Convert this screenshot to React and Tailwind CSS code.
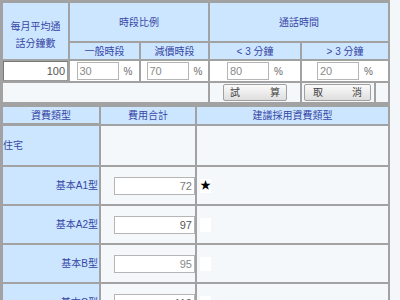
import React from "react";

const font = { fontFamily: '"Liberation Sans", "Noto Sans CJK TC", sans-serif' };

function Hd({ children, className = "" }) {
  return (
    <div className={"bg-[#cde6ff] text-[#3646a6] text-[10px] leading-[17px] flex items-center justify-center text-center " + className}>
      {children}
    </div>
  );
}

function PctCell({ value }) {
  return (
    <div className="bg-white flex items-center justify-center gap-[5px]">
      <div className="w-[42px] h-[18px] bg-white border border-[#b5b5b5] text-[11px] leading-[16px] text-[#8a8a8a] pl-[2px]">{value}</div>
      <span className="text-[10px] text-[#6a6a6a] w-[9px]">%</span>
    </div>
  );
}

function Btn({ a, b, className = "" }) {
  return (
    <div className={"h-[17px] border border-[#a0a0a0] rounded-[2px] bg-gradient-to-b from-[#fbfbfb] to-[#dedede] flex items-center justify-between text-[10px] text-[#444] " + className}>
      <span>{a}</span>
      <span>{b}</span>
    </div>
  );
}

function Row({ label, value, star, valColor = "text-[#777]", left = false, h = "h-[37px]" }) {
  return (
    <>
      <div className={"bg-[#cde6ff] text-[#3646a6] text-[10px] flex items-center " + h + (left ? " justify-start" : " justify-end pr-[1px]")}>{label}</div>
      <div className="bg-[#f5f8fa] flex items-center justify-end">
        {value !== undefined && (
          <div className={"w-[81px] h-[18px] bg-white border border-[#b5b5b5] text-[11px] leading-[16px] text-right pr-[2px] " + valColor}>{value}</div>
        )}
      </div>
      <div className="bg-[#f5f8fa] flex items-center pl-[3px]">
        {value !== undefined && (
          <div className="w-[11px] h-[14px] bg-white flex items-center justify-center text-[11px] text-black leading-none">{star ? "★" : ""}</div>
        )}
      </div>
    </>
  );
}

export default function App() {
  return (
    <div className="w-[400px] h-[300px] overflow-hidden bg-[#f4f7f9]" style={font}>
      <div className="w-[390px] bg-[#a2a2a2] pl-[3px] pr-[2px] pt-[3px]">
        <div className="grid grid-cols-[65px_69px_67px_90px_86px] grid-rows-[38px_16px_20px_19px] gap-[2px]">
          <Hd className="row-span-2 leading-[17px] pt-[7px]">每月平均通<br />話分鐘數</Hd>
          <Hd className="col-span-2">時段比例</Hd>
          <Hd className="col-span-2">通話時間</Hd>
          <Hd>一般時段</Hd>
          <Hd>減價時段</Hd>
          <Hd>&lt; 3 分鐘</Hd>
          <Hd>&gt; 3 分鐘</Hd>
          <div className="bg-white flex">
            <div className="w-full h-full border border-[#9a9a9a] border-t-[#777] border-l-[#777] text-[11px] leading-[18px] text-right pr-[2px] text-[#555]">100</div>
          </div>
          <PctCell value="30" />
          <PctCell value="70" />
          <PctCell value="80" />
          <PctCell value="20" />
          <div className="col-span-3 bg-[#f5f8fa]" />
          <div className="bg-[#f5f8fa] flex items-center justify-center">
            <Btn a="試" b="算" className="w-[64px] px-[6px]" />
          </div>
          <div className="flex gap-[2px]">
            <div className="w-[72px] bg-[#f5f8fa] flex items-center pl-[2px]">
              <Btn a="取" b="消" className="w-[67px] px-[8px]" />
            </div>
            <div className="flex-1 bg-[#f5f8fa]" />
          </div>
        </div>
        <div className="h-[5px]" />
        <div className="grid grid-cols-[96px_94px_191px] gap-[2px]">
          <Hd className="h-[16px]">資費類型</Hd>
          <Hd>費用合計</Hd>
          <Hd>建議採用資費類型</Hd>
          <Row label="住宅" left h="h-[39px]" />
          <Row label="基本A1型" value="72" star />
          <Row label="基本A2型" value="97" valColor="text-[#555]" />
          <Row label="基本B型" value="95" valColor="text-[#888]" />
          <Row label="基本C型" value="110" valColor="text-[#666]" />
        </div>
      </div>
    </div>
  );
}
